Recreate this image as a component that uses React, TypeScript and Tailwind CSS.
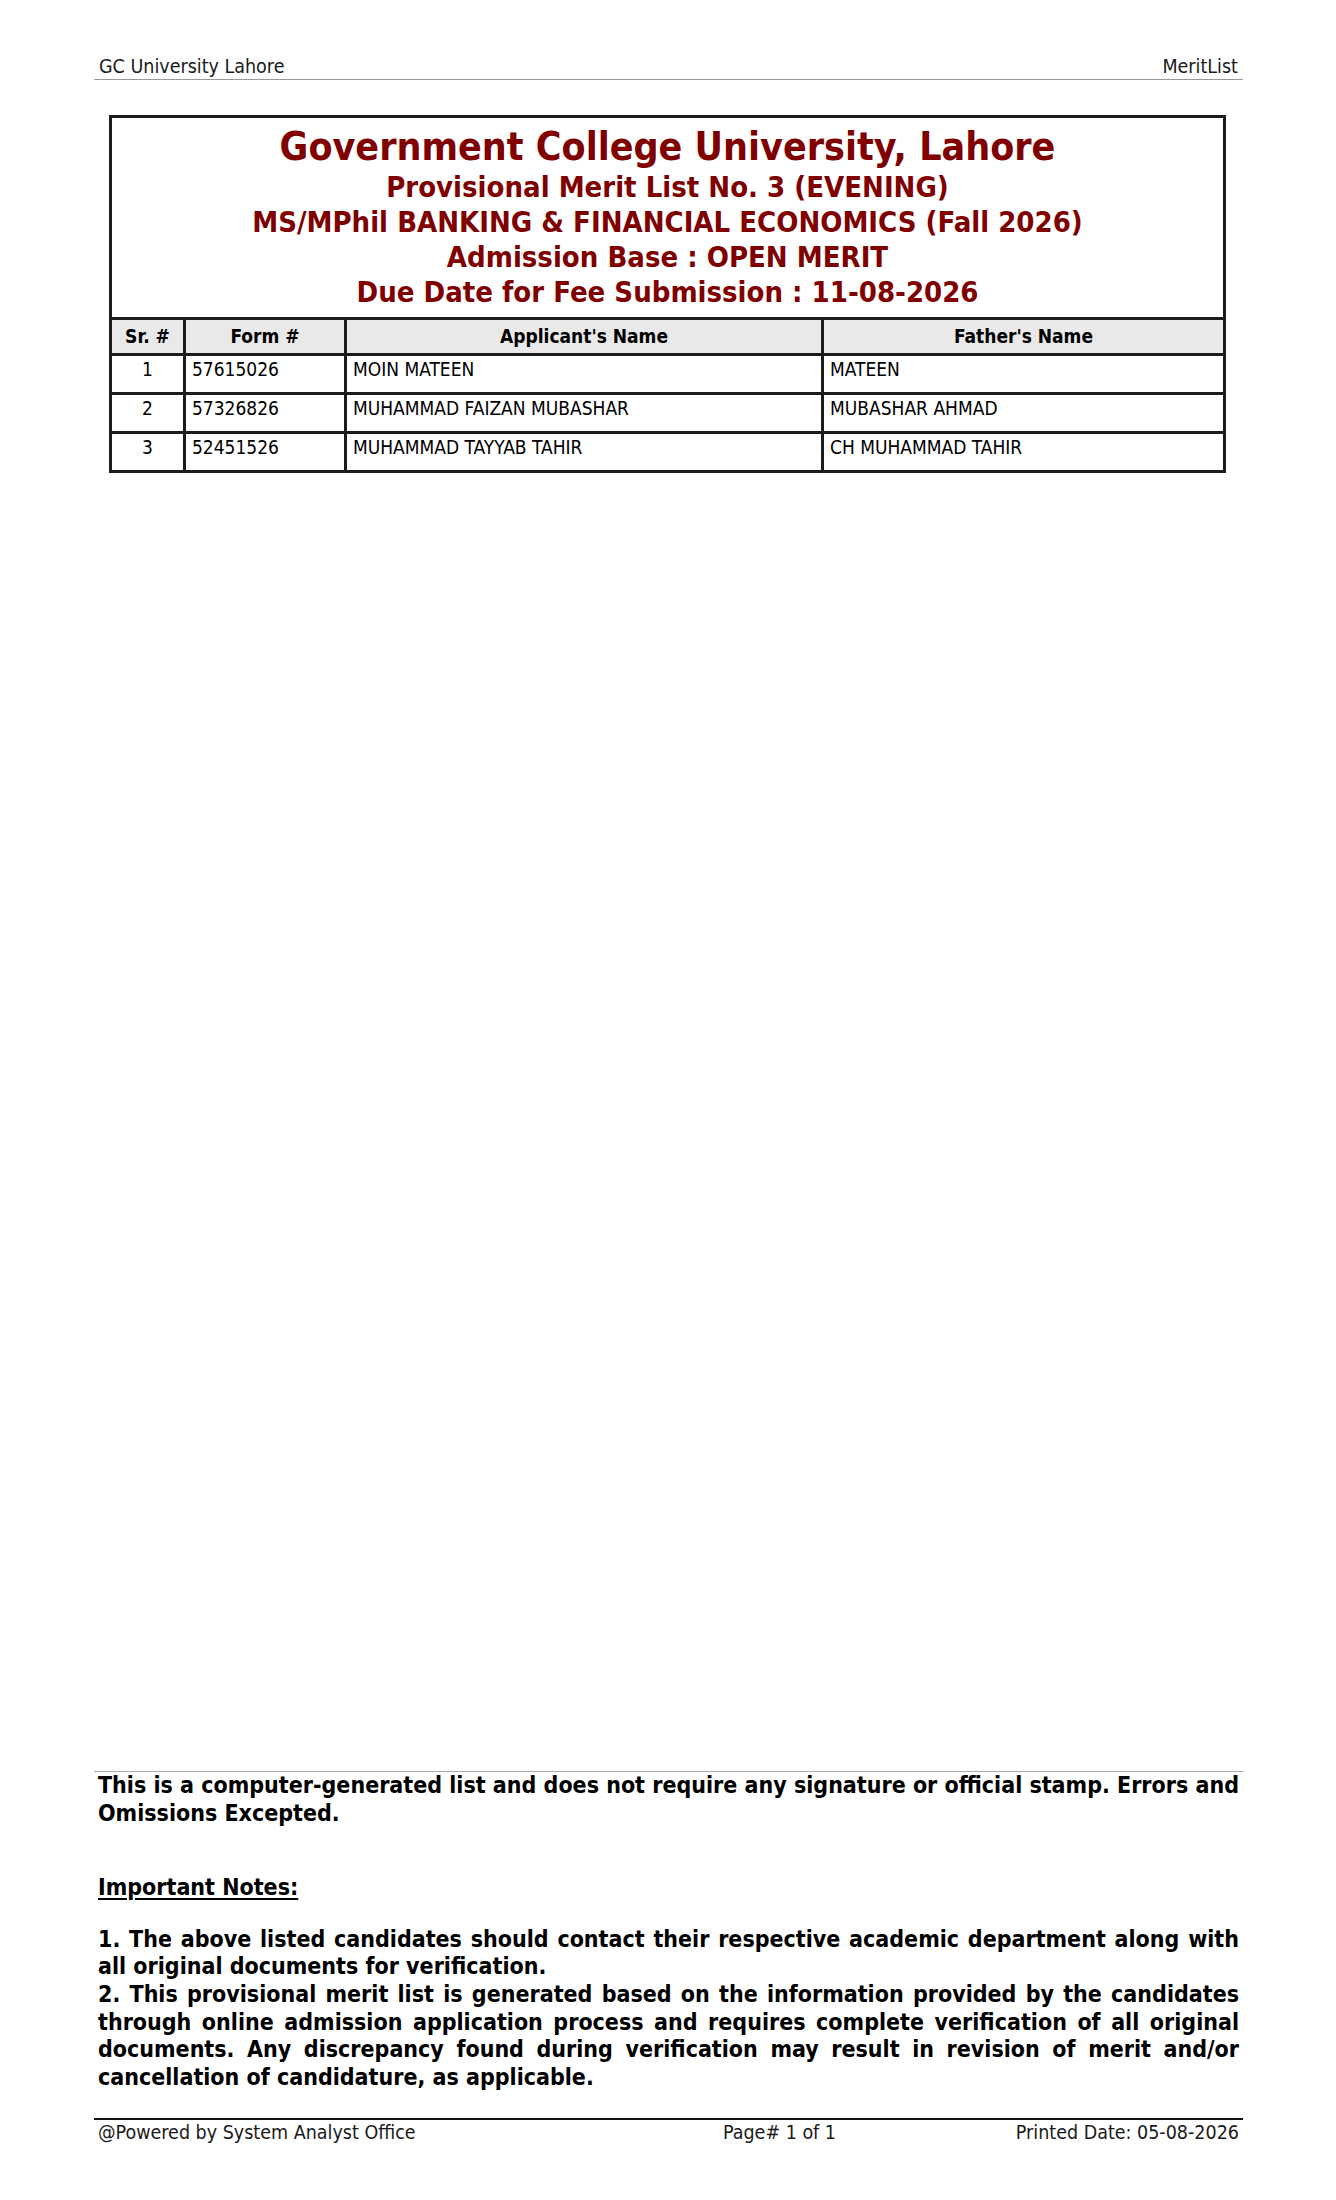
import React from 'react';

type Applicant = { sr: number; form: string; name: string; father: string };

const applicants: Applicant[] = [
  { sr: 1, form: '57615026', name: 'MOIN MATEEN', father: 'MATEEN' },
  { sr: 2, form: '57326826', name: 'MUHAMMAD FAIZAN MUBASHAR', father: 'MUBASHAR AHMAD' },
  { sr: 3, form: '52451526', name: 'MUHAMMAD TAYYAB TAHIR', father: 'CH MUHAMMAD TAHIR' },
];

const subTitles = [
  'Provisional Merit List No. 3 (EVENING)',
  'MS/MPhil BANKING & FINANCIAL ECONOMICS (Fall 2026)',
  'Admission Base : OPEN MERIT',
  'Due Date for Fee Submission : 11-08-2026',
];

// each entry is one printed line; "last" lines are not stretched
const disclaimer: { text: string; last?: boolean }[] = [
  { text: 'This is a computer-generated list and does not require any signature or official stamp. Errors and' },
  { text: 'Omissions Excepted.', last: true },
];

const notes: { text: string; last?: boolean }[] = [
  { text: '1. The above listed candidates should contact their respective academic department along with' },
  { text: 'all original documents for verification.', last: true },
  { text: '2. This provisional merit list is generated based on the information provided by the candidates' },
  { text: 'through online admission application process and requires complete verification of all original' },
  { text: 'documents. Any discrepancy found during verification may result in revision of merit and/or' },
  { text: 'cancellation of candidature, as applicable.', last: true },
];

const font = "font-['DejaVu_Sans_Condensed','DejaVu_Sans',sans-serif] [font-stretch:condensed]";

const JustifiedLines: React.FC<{ lines: { text: string; last?: boolean }[] }> = ({ lines }) => (
  <>
    {lines.map((l, i) => (
      <div
        key={i}
        className={`whitespace-nowrap ${l.last ? 'text-left' : 'text-justify [text-align-last:justify]'}`}
      >
        {l.text}
      </div>
    ))}
  </>
);

export default function App() {
  return (
    <div className={`w-[1336px] h-[2200px] bg-white text-black flex flex-col pl-[94px] pr-[93px] ${font}`}>
      {/* Page header */}
      <header className="flex justify-between items-end pt-[55px] px-[5px] border-b border-[#999] text-[19.5px] leading-[24px] text-[#1a1a1a]">
        <span>GC University Lahore</span>
        <span>MeritList</span>
      </header>

      {/* Merit list box */}
      <table className="mt-[35px] ml-[15px] w-[1117px] table-fixed border-collapse border-[3px] border-[#1c1c1c]">
        <colgroup>
          <col className="w-[74px]" />
          <col className="w-[161px]" />
          <col className="w-[477px]" />
          <col />
        </colgroup>
        <tbody>
          <tr>
            <td colSpan={4} className="border-[3px] border-[#1c1c1c] pt-[6px] pb-[7px] text-center font-bold text-[#800000]">
              <div className="text-[39px] leading-[46px]">Government College University, Lahore</div>
              {subTitles.map(t => (
                <div key={t} className="text-[29px] leading-[35px]">{t}</div>
              ))}
            </td>
          </tr>
          <tr className="bg-[#e9e9e9]">
            {["Sr. #", 'Form #', "Applicant's Name", "Father's Name"].map(h => (
              <th key={h} className="border-[3px] border-[#1c1c1c] py-[5px] text-[19px] leading-[23px] font-bold text-center">
                {h}
              </th>
            ))}
          </tr>
          {applicants.map(a => (
            <tr key={a.sr}>
              <td className="border-[3px] border-[#1c1c1c] align-top pt-[2px] pb-[12px] text-center text-[19px] leading-[22px]">{a.sr}</td>
              <td className="border-[3px] border-[#1c1c1c] align-top pt-[2px] pb-[12px] px-[6px] text-[19px] leading-[22px]">{a.form}</td>
              <td className="border-[3px] border-[#1c1c1c] align-top pt-[2px] pb-[12px] px-[6px] text-[19px] leading-[22px]">{a.name}</td>
              <td className="border-[3px] border-[#1c1c1c] align-top pt-[2px] pb-[12px] px-[6px] text-[19px] leading-[22px]">{a.father}</td>
            </tr>
          ))}
        </tbody>
      </table>

      {/* Bottom notes + footer */}
      <div className="mt-auto">
        <div className="border-t border-[#aaa] px-[4px] font-bold text-[23px] leading-[27.6px]">
          <JustifiedLines lines={disclaimer} />
        </div>
        <div className="mt-[47px] px-[4px] font-bold text-[23px] leading-[27.6px]">
          <span className="underline underline-offset-[3px]">Important Notes:</span>
        </div>
        <div className="mt-[24px] px-[4px] font-bold text-[23px] leading-[27.6px]">
          <JustifiedLines lines={notes} />
        </div>
        <footer className="mt-[26.6px] border-t-2 border-[#111] flex pt-[1px] pb-[55px] px-[4px] text-[19.5px] leading-[24px] text-[#1a1a1a]">
          <span className="w-[625px]">@Powered by System Analyst Office</span>
          <span>Page# 1 of 1</span>
          <span className="flex-1 text-right">Printed Date: 05-08-2026</span>
        </footer>
      </div>
    </div>
  );
}
